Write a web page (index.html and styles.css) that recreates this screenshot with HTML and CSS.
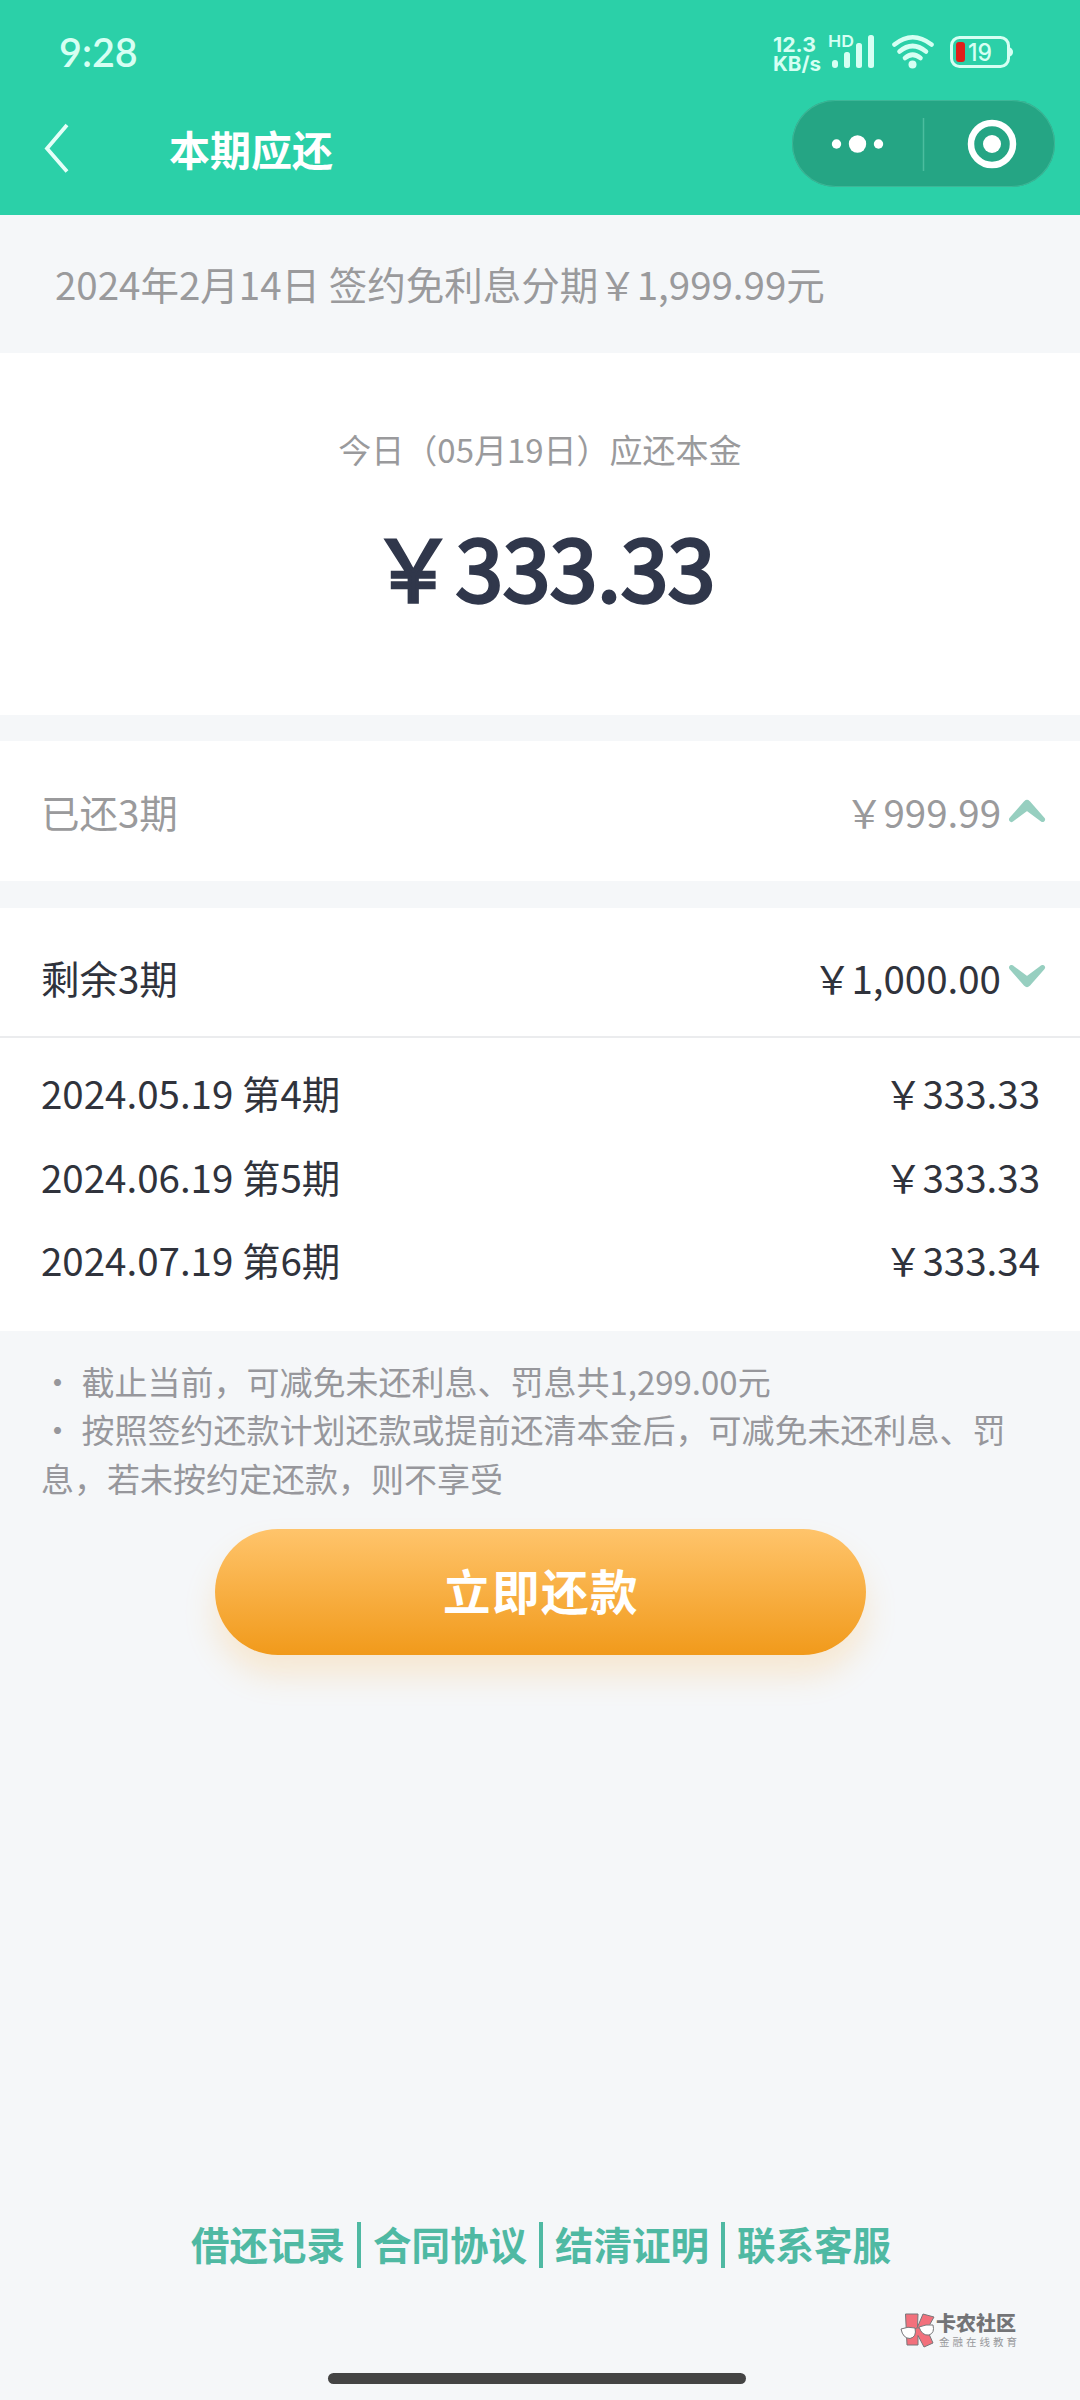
FILE: index.html
```html
<!DOCTYPE html>
<html lang="zh-CN">
<head>
<meta charset="utf-8">
<title>本期应还</title>
<link rel="stylesheet" href="styles.css">
</head>
<body>
<div class="app">
  <header class="header">
    <div class="status">
      <span class="clock">9:28</span>
      <svg class="status-icons" width="244" height="48" viewBox="772 28 244 48">
        <g fill="#d6fff3">
          <text class="net" x="773" y="52" textLength="43" lengthAdjust="spacingAndGlyphs">12.3</text>
          <text class="net" x="773" y="71" textLength="48" lengthAdjust="spacingAndGlyphs">KB/s</text>
          <text class="hd" x="828" y="47" textLength="26" lengthAdjust="spacingAndGlyphs">HD</text>
          <rect x="832" y="60" width="6" height="8" rx="3"/>
          <rect x="844" y="52" width="6" height="16" rx="2.5"/>
          <rect x="856" y="43" width="6" height="25" rx="2.5"/>
          <rect x="868" y="35" width="6" height="33" rx="2.5"/>
          <circle cx="912.5" cy="64.5" r="4"/>
          <path d="M1010 47.500q3 1.500 3 4.500t-3 4.500z"/>
          <text class="charge" x="968" y="61" textLength="24" lengthAdjust="spacingAndGlyphs">19</text>
        </g>
        <g fill="none" stroke="#d6fff3" stroke-width="4.600" stroke-linecap="round">
          <path d="M894.500 44.500Q912.500 30 931.500 44.500"/>
          <path d="M899.500 51.500Q912.500 40.500 926 51.500"/>
          <path d="M905 58Q912.500 51.500 920.500 58"/>
          <rect x="951.500" y="37.500" width="57" height="29" rx="8" stroke-width="3"/>
        </g>
        <rect x="956" y="42" width="9" height="20" rx="3" fill="#e01f1a"/>
      </svg>
    </div>
    <div class="nav">
      <svg class="back" width="28" height="52" viewBox="0 0 28 52"><path d="M24 3 4 26.500l20 23" fill="none" stroke="#e4fff8" stroke-width="3.800"/></svg>
      <h1 class="title">本期应还</h1>
      <div class="capsule">
        <svg width="263" height="87" viewBox="0 0 263 87">
          <g fill="#fff"><circle cx="44.500" cy="44" r="4.700"/><circle cx="65.500" cy="44" r="8.700"/><circle cx="86.500" cy="44" r="4.700"/><circle cx="200" cy="44" r="9"/></g>
          <path d="M131.500 18v53" stroke="#4cbd9f" stroke-width="1.500"/>
          <circle cx="200" cy="44" r="21" fill="none" stroke="#fff" stroke-width="6.500"/>
        </svg>
      </div>
    </div>
  </header>

  <p class="contract">2024年2月14日 签约免利息分期￥1,999.99元</p>

  <section class="due">
    <p class="due-label">今日（05月19日）应还本金</p>
    <p class="due-amount">￥333.33</p>
  </section>

  <section class="group paid">
    <span>已还3期</span>
    <span class="sum">￥999.99<svg class="arrow" width="38" height="24" viewBox="0 0 38 24"><path d="M3.500 20.500 18 4q1-1 2 0l14.500 16.500L19 9z"/></svg></span>
  </section>

  <section class="remaining">
    <div class="group">
      <span>剩余3期</span>
      <span class="sum">￥1,000.00<svg class="arrow" width="38" height="24" viewBox="0 0 38 24"><path d="M3.500 2.500 18 19q1 1 2 0L34.500 2.500 19 14z"/></svg></span>
    </div>
    <ul class="plan">
      <li><span>2024.05.19 第4期</span><span>￥333.33</span></li>
      <li><span>2024.06.19 第5期</span><span>￥333.33</span></li>
      <li><span>2024.07.19 第6期</span><span>￥333.34</span></li>
    </ul>
  </section>

  <div class="notes">
    <p>・ 截止当前，可减免未还利息、罚息共1,299.00元</p>
    <p>・ 按照签约还款计划还款或提前还清本金后，可减免未还利息、罚息，若未按约定还款，则不享受</p>
  </div>

  <button class="pay">立即还款</button>

  <footer class="footer">
    <nav class="links"><a>借还记录</a><i></i><a>合同协议</a><i></i><a>结清证明</a><i></i><a>联系客服</a></nav>
    <div class="brand">
      <svg width="36" height="38" viewBox="0 0 36 38">
        <g fill="#f2707c" stroke="#77777a" stroke-width="1" stroke-linejoin="round">
          <path d="M5.500 3H18l-.5 13L23 3l11 3-7 12.500 6 13.500-9 4-6-11.500v9.500H7z"/>
        </g>
        <g fill="#fff" stroke="#77777a" stroke-width="1">
          <path d="M1 18q7-3 14-1 2 9-5 10.500Q3 27.500 1 18z"/>
          <path d="M19 16q7-3 14-2 2 8-4 10-7 1-10-8z"/>
          <path d="M15 18q2-2 4-1" fill="none"/>
        </g>
      </svg>
      <div class="brand-text"><strong>卡农社区</strong><span>金融在线教育</span></div>
    </div>
    <div class="home-bar"></div>
  </footer>
</div>
</body>
</html>
```
FILE: styles.css
```css
* { box-sizing: border-box; }
body {
  margin: 0;
  background: #f5f7f9;
  font-family: "Noto Sans CJK SC", sans-serif;
  font-size: 38.5px;
  color: #30333c;
}
h1, p, ul { margin: 0; padding: 0; }
.app { width: 1080px; height: 2400px; display: flex; flex-direction: column; overflow: hidden; }

.header { height: 215px; background: #2bd0a8; flex: none; }
.status { height: 100px; display: flex; justify-content: space-between; align-items: flex-start; padding: 27px 64px 0 59px; }
.status-icons { margin-top: 1px; }
.clock { font: 600 39.5px/50px Lato, sans-serif; color: #d6fff3; }
.net { font: 700 20px Inter, sans-serif; }
.hd { font: 600 16.5px Inter, sans-serif; }
.charge { font: 500 24px Inter, sans-serif; }
.nav { height: 87px; display: flex; align-items: center; padding: 0 25px 0 43px; }
.back { margin-top: 8px; }
.title { margin: 8px auto 0 98px; font-size: 41px; line-height: 60px; font-weight: 700; color: #fff; }
.capsule { width: 263px; height: 87px; border-radius: 44px; background: #25a584; box-shadow: inset 0 0 0 1px #3db697; }
.capsule svg, .arrow { display: block; }

.contract { height: 138px; flex: none; padding: 0 55px; line-height: 137px; color: #9a9a9c; }

.due { height: 362px; flex: none; background: #fff; text-align: center; padding-top: 72px; }
.due-label { font-size: 33px; line-height: 48px; color: #9a9a9c; }
.due-amount { margin-top: 32px; padding-left: 6px; font-size: 85px; line-height: 120px; color: #30374b; -webkit-text-stroke: 3.4px #30374b; }

.group { display: flex; justify-content: space-between; align-items: center; padding: 0 34px 0 41px; }
.sum { display: flex; align-items: center; gap: 7px; }
.arrow path { fill: #97cfc0; stroke: #97cfc0; stroke-width: 5; stroke-linejoin: round; }
.paid { flex: none; height: 140px; margin-top: 26px; background: #fff; color: #9a9a9c; }
.remaining { flex: none; height: 423px; margin-top: 27px; background: #fff; }
.remaining .group { border-bottom: 2px solid #ebecee; padding-top: 10px; height: 130px; }
.plan { list-style: none; padding: 13px 40px 0 41px; }
.plan li { display: flex; justify-content: space-between; line-height: 83.5px; }

.notes { flex: none; height: 198px; padding: 26px 40px 0 41px; font-size: 33px; line-height: 48.3px; color: #97979c; }

.pay {
  flex: none; align-self: center; width: 651px; height: 126px; border: 0; border-radius: 63px; padding: 0 0 4px 2px;
  background: linear-gradient(#ffc46b, #f19a1b);
  box-shadow: 0 20px 32px rgba(255, 170, 50, .2);
  font: 700 47.5px/120px "Noto Sans CJK SC", sans-serif; letter-spacing: 1.5px; color: #fff;
}

.footer { flex: 1; display: flex; flex-direction: column; padding-top: 560px; }
.links { display: flex; justify-content: center; align-items: center; height: 56px; padding-left: 2px; font-weight: 700; color: #4fb9a3; }
.links a { margin-top: -1px; }
.links i { width: 4px; height: 46px; margin: 3px 12px 0; background: #4fb9a3; }
.brand { display: flex; align-self: flex-end; margin: 40px 62px 0 0; height: 38px; }
.brand-text { display: flex; flex-direction: column; width: 82px; padding-top: 1px; color: #737477; }
.brand strong { font-size: 20px; line-height: 22px; font-weight: 900; white-space: nowrap; }
.brand span { font-size: 10.5px; line-height: 15px; letter-spacing: 3px; padding-left: 3px; white-space: nowrap; color: #98999c; }
.home-bar { width: 418px; height: 11px; border-radius: 6px; background: #444; margin: 24px 0 0 328px; }
```
